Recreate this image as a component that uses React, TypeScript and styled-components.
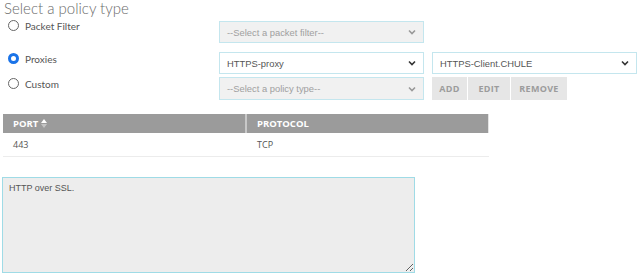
import styled, { createGlobalStyle } from 'styled-components';

const GlobalStyle = createGlobalStyle`
  body {
    margin: 0;
    background: #fff;
    font-family: "Liberation Sans", Arial, sans-serif;
  }
`;

const Page = styled.div`
  width: 640px;
  height: 280px;
  overflow: hidden;
`;

const Title = styled.h2`
  margin: 0;
  padding: 0 0 0 4px;
  height: 19px;
  font-family: Lato, sans-serif;
  font-weight: 300;
  font-size: 15px;
  line-height: 17px;
  color: #6a6a6a;
`;

const PolicyGrid = styled.div`
  display: grid;
  grid-template-columns: 219px 205px 8px 205px;
  grid-template-rows: 22px 9px 22px 3px 23px;
  margin-top: 2px;
`;

const RadioLabel = styled.label<{ $row: number; $shift: number }>`
  grid-column: 1;
  grid-row: ${(p) => p.$row};
  display: flex;
  align-items: flex-start;
  gap: 6px;
  padding-left: 8px;
  font-family: Lato, sans-serif;
  font-size: 10px;
  line-height: 12px;
  color: #555;
  margin-top: ${(p) => p.$shift}px;
`;

const RadioDot = styled.span<{ $checked?: boolean }>`
  box-sizing: border-box;
  width: 11px;
  height: 11px;
  border-radius: 50%;
  border: ${(p) => (p.$checked ? '3px solid #1a73e8' : '1px solid #666')};
  background: #fff;
  flex: none;
`;

const SelectBox = styled.div<{ $row: number; $col: number; $disabled?: boolean }>`
  grid-row: ${(p) => p.$row};
  grid-column: ${(p) => p.$col};
  box-sizing: border-box;
  display: flex;
  align-items: center;
  justify-content: space-between;
  border: 1px solid #c4e6ee;
  background: ${(p) => (p.$disabled ? '#f1f1f1' : '#fff')};
  padding: 0 7px 0 7px;
  font-size: 9.4px;
  color: ${(p) => (p.$disabled ? '#a0a0a0' : '#555')};
  white-space: nowrap;
`;

const Chevron = styled.svg<{ $disabled?: boolean }>`
  width: 8px;
  height: 6px;
  stroke: ${(p) => (p.$disabled ? '#999' : '#333')};
  fill: none;
  stroke-width: 1.6;
`;

const ButtonGroup = styled.div`
  grid-row: 5;
  grid-column: 4;
  display: flex;
`;

const ActionButton = styled.button<{ $w: number }>`
  box-sizing: border-box;
  width: ${(p) => p.$w}px;
  height: 23px;
  margin: 0 1px 0 0;
  padding: 0;
  border: none;
  background: #e6e6e6;
  color: #9c9c9c;
  font-family: "Open Sans", sans-serif;
  font-weight: 700;
  font-size: 9px;
  letter-spacing: 0.3px;
`;

const Table = styled.div`
  width: 486px;
  margin: 14px 0 0 3px;
`;

const HeaderRow = styled.div`
  display: grid;
  grid-template-columns: 242px 244px;
  height: 19px;
  background: #9b9b9b;
`;

const HeaderCell = styled.div<{ $last?: boolean }>`
  display: flex;
  align-items: center;
  gap: 3px;
  padding-left: 10px;
  font-family: "Open Sans", sans-serif;
  font-weight: 700;
  font-size: 9.5px;
  color: #fff;
  border-left: ${(p) => (p.$last ? '2px solid #c8c8c8' : 'none')};
  border-right: ${(p) => (p.$last ? '1px solid #e4e4e4' : 'none')};
`;

const BodyRow = styled.div`
  display: grid;
  grid-template-columns: 242px 244px;
  height: 23px;
  border-bottom: 1px solid #ececec;
`;

const BodyCell = styled.div`
  display: flex;
  align-items: center;
  padding-left: 10px;
  font-family: "Open Sans", sans-serif;
  font-size: 9px;
  color: #555;
  & + & {
    padding-left: 12px;
  }
`;

const Description = styled.textarea`
  display: block;
  box-sizing: border-box;
  width: 413px;
  height: 96px;
  margin: 20px 0 0 2px;
  border: 1px solid #9fdbe6;
  background: #ededed;
  padding: 5px 6px;
  font-family: "Liberation Sans", Arial, sans-serif;
  font-size: 9px;
  color: #555;
  resize: both;
  outline: none;
`;

const SortIcon = () => (
  <svg width="6" height="9" viewBox="0 0 6 9">
    <path d="M0 4 L3 0 L6 4 Z" fill="#fff" />
    <path d="M0 5 L3 9 L6 5 Z" fill="#c4c4c4" />
  </svg>
);

const Select = ({ row, col, text, disabled }: { row: number; col: number; text: string; disabled?: boolean }) => (
  <SelectBox $row={row} $col={col} $disabled={disabled}>
    <span>{text}</span>
    <Chevron $disabled={disabled} viewBox="0 0 8 6">
      <path d="M1 1.5 L4 4.5 L7 1.5" />
    </Chevron>
  </SelectBox>
);

export default function App() {
  return (
    <Page>
      <GlobalStyle />
      <Title>Select a policy type</Title>
      <PolicyGrid>
        <RadioLabel $row={1} $shift={-1}>
          <RadioDot />
          Packet Filter
        </RadioLabel>
        <Select row={1} col={2} text="--Select a packet filter--" disabled />
        <RadioLabel $row={3} $shift={1}>
          <RadioDot $checked />
          Proxies
        </RadioLabel>
        <Select row={3} col={2} text="HTTPS-proxy" />
        <Select row={3} col={4} text="HTTPS-Client.CHULE" />
        <RadioLabel $row={5} $shift={1}>
          <RadioDot />
          Custom
        </RadioLabel>
        <Select row={5} col={2} text="--Select a policy type--" disabled />
        <ButtonGroup>
          <ActionButton $w={35}>ADD</ActionButton>
          <ActionButton $w={42}>EDIT</ActionButton>
          <ActionButton $w={56}>REMOVE</ActionButton>
        </ButtonGroup>
      </PolicyGrid>
      <Table>
        <HeaderRow>
          <HeaderCell>
            PORT <SortIcon />
          </HeaderCell>
          <HeaderCell $last>PROTOCOL</HeaderCell>
        </HeaderRow>
        <BodyRow>
          <BodyCell>443</BodyCell>
          <BodyCell>TCP</BodyCell>
        </BodyRow>
      </Table>
      <Description defaultValue="HTTP over SSL." />
    </Page>
  );
}
